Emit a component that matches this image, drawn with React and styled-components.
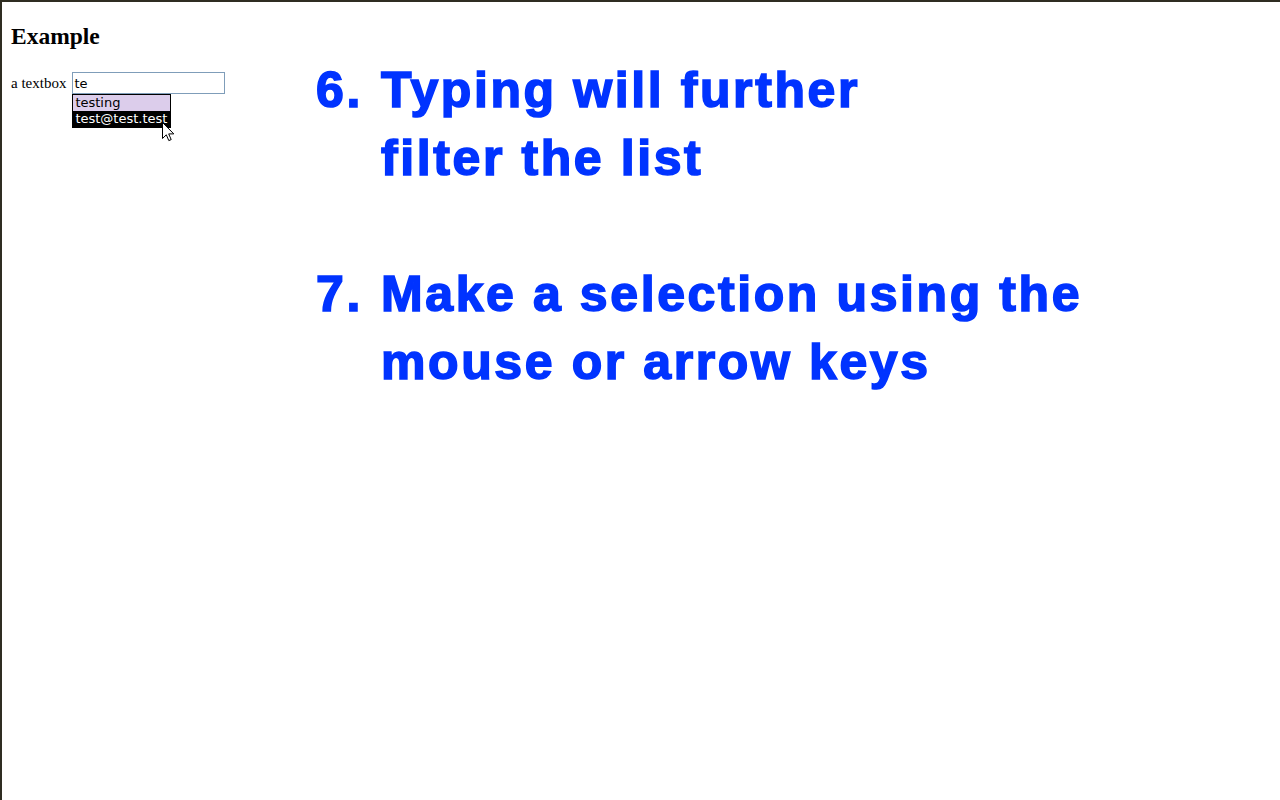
import React from 'react';
import styled, { createGlobalStyle } from 'styled-components';

const GlobalStyle = createGlobalStyle`
  html, body {
    margin: 0;
    padding: 0;
    background: #ffffff;
  }
  body {
    font-family: "Liberation Serif", "Times New Roman", serif;
  }
`;

const Frame = styled.div`
  box-sizing: border-box;
  width: 1280px;
  height: 800px;
  border-top: 2px solid #2f2d22;
  border-left: 2px solid #2f2d22;
  display: flex;
  overflow: hidden;
`;

const Demo = styled.div`
  width: 305px;
  padding-left: 9px;
  flex-shrink: 0;
`;

const Heading = styled.h2`
  margin: 20px 0 0;
  font-size: 23.5px;
  line-height: 28px;
  font-weight: bold;
  color: #000;
`;

const FieldRow = styled.div`
  margin-top: 22px;
  display: flex;
  align-items: center;
  gap: 6px;
`;

const Label = styled.label`
  font-size: 15px;
  line-height: 18px;
  color: #000;
`;

const InputWrap = styled.div`
  position: relative;
`;

const TextBox = styled.input`
  box-sizing: border-box;
  width: 153px;
  height: 22px;
  margin: 0;
  padding: 1px 1px;
  border: 1px solid #7f9db9;
  font-family: "DejaVu Sans", Verdana, sans-serif;
  font-size: 13px;
  color: #000;
  outline: none;
  background: #fff;
`;

const Suggestions = styled.ul`
  position: absolute;
  left: 0;
  top: 22px;
  box-sizing: border-box;
  width: 99px;
  margin: 0;
  padding: 0;
  list-style: none;
  border: 1px solid #000;
  background: #fff;
  font-family: "DejaVu Sans", Verdana, sans-serif;
  font-size: 13px;
`;

const Suggestion = styled.li`
  height: 16px;
  line-height: 16px;
  padding-left: 2px;
  white-space: nowrap;
  overflow: hidden;
  background: ${p => (p.$active ? '#000000' : '#dccdeb')};
  color: ${p => (p.$active ? '#ffffff' : '#000000')};
`;

const Pointer = styled.svg`
  position: absolute;
  left: 90px;
  top: 50px;
  width: 13px;
  height: 20px;
`;

const Notes = styled.div`
  padding-top: 54px;
  font-family: "Liberation Sans", Arial, sans-serif;
  font-weight: bold;
  font-size: 50px;
  line-height: 68px;
  letter-spacing: 2.6px;
  color: #0033ff;
  -webkit-text-stroke: 1.6px #0033ff;
`;

const Step = styled.div`
  display: grid;
  grid-template-columns: 65px auto;
  margin-bottom: 68px;
`;

const StepNum = styled.span`
  white-space: nowrap;
`;

const StepText = styled.span`
  white-space: nowrap;
`;

const steps = [
  { n: '6.', lines: ['Typing will further', 'filter the list'] },
  { n: '7.', lines: ['Make a selection using the', 'mouse or arrow keys'] },
];

export default function App() {
  return (
    <>
      <GlobalStyle />
      <Frame>
        <Demo>
          <Heading>Example</Heading>
          <FieldRow>
            <Label htmlFor="tb">a textbox</Label>
            <InputWrap>
              <TextBox id="tb" defaultValue="te" />
              <Suggestions>
                <Suggestion>testing</Suggestion>
                <Suggestion $active>test@test.test</Suggestion>
              </Suggestions>
              <Pointer viewBox="0 0 13 20">
                <path
                  d="M0.5 0.5 L0.5 16.5 L4.3 12.8 L6.8 18.6 L9.2 17.6 L6.7 11.9 L11.8 11.9 Z"
                  fill="#fff"
                  stroke="#000"
                  strokeWidth="1"
                  strokeLinejoin="miter"
                />
              </Pointer>
            </InputWrap>
          </FieldRow>
        </Demo>
        <Notes>
          {steps.map(s => (
            <Step key={s.n}>
              <StepNum>{s.n}</StepNum>
              <StepText>
                {s.lines.map((l, i) => (
                  <div key={i}>{l}</div>
                ))}
              </StepText>
            </Step>
          ))}
        </Notes>
      </Frame>
    </>
  );
}
